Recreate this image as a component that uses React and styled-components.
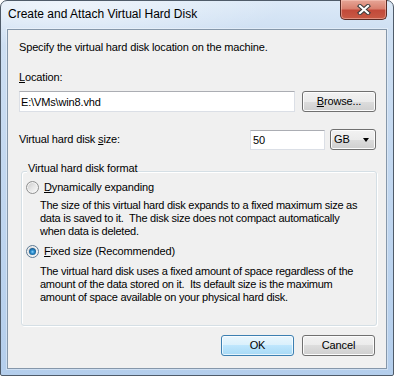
import React from "react";
import styled, { createGlobalStyle } from "styled-components";

const GlobalStyle = createGlobalStyle`
  html, body {
    margin: 0;
    padding: 0;
    background: #ffffff;
  }
  * {
    box-sizing: border-box;
  }
`;

const Window = styled.div`
  width: 394px;
  height: 376px;
  display: flex;
  flex-direction: column;
  padding: 0 6px 6px 6px;
  border: 1px solid #4f5b69;
  border-radius: 7px 7px 2px 2px;
  background:
    radial-gradient(ellipse 220px 40px at 60px 6px, rgba(255, 255, 255, 0.55), rgba(255, 255, 255, 0)),
    linear-gradient(180deg, #dce9f7 0%, #cfe0f3 28px, #c3d8f0 160px, #b4ceec 100%);
  font-family: "Segoe UI", "Liberation Sans", Arial, sans-serif;
`;

const TitleBar = styled.div`
  height: 28px;
  display: flex;
  align-items: flex-start;
  justify-content: space-between;
`;

const Title = styled.div`
  margin: 6px 0 0 1px;
  font-size: 12px;
  line-height: 15px;
  color: #000000;
`;

const CloseButton = styled.div`
  width: 47px;
  height: 20px;
  margin-top: -1px;
  display: flex;
  align-items: center;
  justify-content: center;
  border: 1px solid #5a2a24;
  border-top: none;
  border-radius: 0 0 5px 5px;
  background: linear-gradient(180deg, #e6a697 0%, #d9806f 45%, #c24a3a 55%, #c85a45 100%);
  box-shadow: inset 0 0 0 1px rgba(255, 210, 200, 0.45);
`;

const Client = styled.div`
  flex: 1;
  display: flex;
  flex-direction: column;
  padding: 11px 10px 0 11px;
  border: 1px solid #8597aa;
  background: #f0f0f0;
  box-shadow: 0 0 0 1px rgba(255, 255, 255, 0.35);
  color: #000000;
  font-family: Tahoma, "Liberation Sans", Arial, sans-serif;
  font-size: 11px;
  line-height: 13px;
  letter-spacing: -0.15px;
`;

const Text = styled.div`
  margin-top: ${p => p.$top || 0}px;
  white-space: pre;
`;

const Key = styled.span`
  text-decoration: underline;
  text-underline-offset: 1px;
`;

const Row = styled.div`
  display: flex;
  align-items: center;
  gap: ${p => p.$gap || 0}px;
  margin-top: ${p => p.$top || 0}px;
  height: 21px;
`;

const Spacer = styled.div`
  flex: 1;
`;

const Field = styled.input`
  width: ${p => (p.$width ? `${p.$width}px` : "auto")};
  flex: ${p => (p.$width ? "none" : 1)};
  min-width: 0;
  height: ${p => p.$height || 21}px;
  margin: 0;
  padding: 0 0 0 ${p => p.$pad || 1}px;
  border: 1px solid #dbdfe6;
  border-top-color: #abadb3;
  background: #ffffff;
  color: #000000;
  font: inherit;
  letter-spacing: inherit;
  outline: none;
`;

const Button = styled.button`
  width: ${p => p.$width}px;
  height: 21px;
  flex: none;
  margin: 0;
  padding: 0;
  border: 1px solid ${p => (p.$primary ? "#3c7fb1" : "#707070")};
  border-radius: 3px;
  background: ${p =>
    p.$primary
      ? "linear-gradient(180deg, #eaf6fd 0%, #d9f0fc 50%, #bee6fd 50%, #a7d9f5 100%)"
      : "linear-gradient(180deg, #f2f2f2 0%, #ebebeb 50%, #dddddd 50%, #cfcfcf 100%)"};
  box-shadow: inset 0 0 0 1px ${p => (p.$primary ? "rgba(255, 255, 255, 0.7)" : "#fcfcfc")};
  color: #000000;
  font: inherit;
  letter-spacing: inherit;
  text-align: center;
`;

const Combo = styled.div`
  width: 46px;
  height: 21px;
  flex: none;
  display: flex;
  align-items: center;
  justify-content: space-between;
  padding: 0 6px 0 3px;
  border: 1px solid #707070;
  border-radius: 3px;
  background: linear-gradient(180deg, #f2f2f2 0%, #ebebeb 50%, #dddddd 50%, #cfcfcf 100%);
  box-shadow: inset 0 0 0 1px #fcfcfc;
`;

const Arrow = styled.span`
  width: 0;
  height: 0;
  margin-top: 1px;
  border-left: 3.5px solid transparent;
  border-right: 3.5px solid transparent;
  border-top: 4px solid #000000;
`;

const GroupBox = styled.div`
  position: relative;
  margin: 21px -1px 0 2px;
  padding: 9px 0 21px 4px;
  border: 1px solid #d5dfe5;
  border-radius: 3px;
  box-shadow: inset 1px 1px 0 #ffffff, 1px 1px 0 #ffffff;
`;

const Caption = styled.div`
  position: absolute;
  top: -10px;
  left: 5px;
  padding: 0 1px;
  background: #f0f0f0;
  white-space: pre;
`;

const RadioRow = styled.div`
  display: flex;
  align-items: center;
  gap: 5px;
  height: 13px;
  margin-top: ${p => p.$top || 0}px;
`;

const Radio = styled.span`
  width: 13px;
  height: 13px;
  flex: none;
  display: flex;
  align-items: center;
  justify-content: center;
  border: 1px solid ${p => (p.$checked ? "#5f7c96" : "#8e8f8f")};
  border-radius: 50%;
  background: linear-gradient(135deg, #c8c8c8 0%, #e6e6e6 50%, #fbfbfb 100%);
  box-shadow: inset 0 0 0 1px #f4f4f4;

  &::after {
    content: "";
    display: ${p => (p.$checked ? "block" : "none")};
    width: 7px;
    height: 7px;
    border-radius: 50%;
    background: radial-gradient(circle at 50% 55%, #8fd6ff 0, #2e90d0 1.6px, #175d92 3.5px);
  }
`;

const Description = styled.div`
  margin: ${p => p.$top || 0}px 0 0 14px;
  white-space: pre;
  letter-spacing: -0.25px;
`;

const Footer = styled.div`
  display: flex;
  justify-content: flex-end;
  gap: 8px;
  margin: 9px 1px 0 0;
`;

const CloseGlyph = () => (
  <svg width="14" height="11" viewBox="0 0 14 11">
    <path d="M3 2 L11 9 M11 2 L3 9" stroke="#3b3b3b" strokeWidth="4.2" strokeLinecap="square" fill="none" />
    <path d="M3 2 L11 9 M11 2 L3 9" stroke="#ffffff" strokeWidth="2.2" strokeLinecap="square" fill="none" />
  </svg>
);

export default function App() {
  return (
    <>
      <GlobalStyle />
      <Window>
        <TitleBar>
          <Title>Create and Attach Virtual Hard Disk</Title>
          <CloseButton>
            <CloseGlyph />
          </CloseButton>
        </TitleBar>

        <Client>
          <Text>Specify the virtual hard disk location on the machine.</Text>

          <Text $top={17}>
            <Key>L</Key>ocation:
          </Text>
          <Row $top={7} $gap={7}>
            <Field readOnly value="E:\VMs\win8.vhd" />
            <Button $width={74}>
              <Key>B</Key>rowse...
            </Button>
          </Row>

          <Row $top={17} $gap={5}>
            <Text>
              Virtual hard disk <Key>s</Key>ize:
            </Text>
            <Spacer />
            <Field readOnly value="50" $width={75} $height={20} $pad={2} />
            <Combo>
              <span>GB</span>
              <Arrow />
            </Combo>
          </Row>

          <GroupBox>
            <Caption>Virtual hard disk format</Caption>
            <RadioRow>
              <Radio />
              <span>
                <Key>D</Key>ynamically expanding
              </span>
            </RadioRow>
            <Description $top={5}>
              {"The size of this virtual hard disk expands to a fixed maximum size as\ndata is saved to it.  The disk size does not compact automatically\nwhen data is deleted."}
            </Description>

            <RadioRow $top={7}>
              <Radio $checked />
              <span>
                <Key>F</Key>ixed size (Recommended)
              </span>
            </RadioRow>
            <Description $top={7}>
              {"The virtual hard disk uses a fixed amount of space regardless of the\namount of the data stored on it.  Its default size is the maximum\namount of space available on your physical hard disk."}
            </Description>
          </GroupBox>

          <Footer>
            <Button $width={73} $primary>OK</Button>
            <Button $width={73}>Cancel</Button>
          </Footer>
        </Client>
      </Window>
    </>
  );
}
